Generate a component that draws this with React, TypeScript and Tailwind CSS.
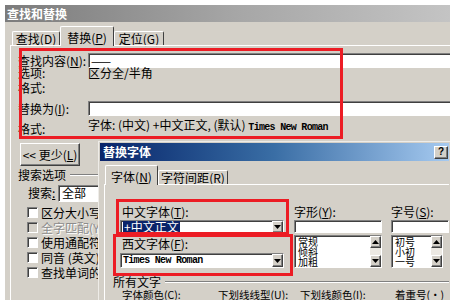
import React from "react";

const raised =
  "bg-[#d4d0c8] border border-t-white border-l-white border-r-[#404040] border-b-[#404040] shadow-[inset_-1px_-1px_0_#808080]";

function Field({ className = "", children }: { className?: string; children?: React.ReactNode }) {
  return (
    <div
      className={`bg-white border border-t-[#808080] border-l-[#808080] border-r-white border-b-white shadow-[inset_1px_1px_0_#404040] flex items-center ${className}`}
    >
      {children}
    </div>
  );
}

function Arrow({ up = false }: { up?: boolean }) {
  return (
    <svg width="7" height="4" viewBox="0 0 7 4">
      <path d={up ? "M0 4h7L3.5 0z" : "M0 0h7L3.5 4z"} fill="#000" />
    </svg>
  );
}

function ArrowBtn({ up = false, className = "" }: { up?: boolean; className?: string }) {
  return (
    <div className={`${raised} flex items-center justify-center ${className}`}>
      <Arrow up={up} />
    </div>
  );
}

function Tab({ label, k, active = false, w }: { label: string; k: string; active?: boolean; w: string }) {
  return (
    <div
      className={`${w} ${
        active ? "h-[20px] -mb-px pt-[3px] bg-[#d4d0c8] z-10" : "h-[14px]"
      } flex items-center justify-center whitespace-nowrap border-t border-l border-white border-r border-r-[#404040] rounded-t-[2px]`}
    >
      {label}(<u>{k}</u>)
    </div>
  );
}

function Check({ label, disabled = false }: { label: string; disabled?: boolean }) {
  return (
    <div className="h-[15px] flex items-center pl-[9px] gap-[3px]">
      <div
        className={`w-[11px] h-[11px] border border-t-[#808080] border-l-[#808080] border-r-white border-b-white shadow-[inset_1px_1px_0_#404040] ${
          disabled ? "bg-[#d4d0c8]" : "bg-white"
        }`}
      />
      <span className={`whitespace-nowrap ${disabled ? "text-[#8c8c8c] [text-shadow:1px_1px_0_#fff]" : ""}`}>{label}</span>
    </div>
  );
}

function ListBox({ items, w }: { items: string[]; w: string }) {
  return (
    <Field className={`${w} h-[33px] mt-[2px] items-stretch`}>
      <div className="flex-1 flex flex-col pl-[3px] text-[10px] leading-[10px] pt-[1px]">
        {items.map((t) => (
          <div key={t} className="h-[10px]">{t}</div>
        ))}
      </div>
      <div className="w-[11px] flex flex-col bg-[#ece9e3]">
        <ArrowBtn up className="h-[12px]" />
        <div className="flex-1" />
        <ArrowBtn className="h-[12px]" />
      </div>
    </Field>
  );
}

export default function App() {
  return (
    <div className="relative w-[450px] h-[300px] overflow-hidden bg-white font-['Noto_Sans_CJK_SC',sans-serif] text-[12px] leading-none text-black">
      {/* 查找和替换 window */}
      <div className="ml-[5px] mt-[5px] w-[460px] h-[300px] flex flex-col bg-[#d4d0c8]">
        <div className="h-[17px] flex items-center pl-[2px] bg-linear-to-r from-[#7c7c7c] via-[#a6a6a6] to-[#c6c6c6] text-white font-bold">
          查找和替换
        </div>
        <div className="h-[23px] flex items-end pl-[7px]">
          <Tab label="查找" k="D" w="w-[48px]" />
          <Tab label="替换" k="P" w="w-[54px]" active />
          <Tab label="定位" k="G" w="w-[50px]" />
        </div>
        <div className="flex-1 ml-[5px] border-t border-l border-white pl-[7px] flex flex-col">
          <div className="h-[15px] mt-[7px] flex items-center">
            <span className="w-[70px] whitespace-nowrap">查找内容(<u>N</u>):</span>
            <Field className="flex-1 h-[15px] pl-[2px]">——</Field>
          </div>
          <div className="h-[10px] flex items-center">
            <span className="w-[70px]">选项:</span>
            <span>区分全/半角</span>
          </div>
          <div className="h-[20px] flex items-center">
            <span>格式:</span>
          </div>
          <div className="h-[15px] mt-[3px] flex items-center">
            <span className="w-[70px] whitespace-nowrap">替换为(<u>I</u>):</span>
            <Field className="flex-1 h-[15px]" />
          </div>
          <div className="h-[20px] flex items-start">
            <span className="w-[70px] mt-[7px]">格式:</span>
            <span className="mt-[3px] whitespace-nowrap">
              字体: (中文) +中文正文, (默认){" "}
              <span className="font-['Liberation_Mono',monospace] text-[10px] font-bold tracking-[-0.7px]">Times New Roman</span>
            </span>
          </div>

          <div className={`${raised} mt-[7px] ml-[2px] w-[60px] h-[23px] flex items-center justify-center whitespace-nowrap`}>
            &lt;&lt; 更少(<u>L</u>)
          </div>
          <div className="h-[18px] flex items-center w-[90px]">
            <span className="whitespace-nowrap">搜索选项</span>
            <div className="flex-1 ml-[4px] border-t border-t-[#808080] border-b border-b-white" />
          </div>
          <div className="h-[18px] flex items-center">
            <span className="w-[40px] pl-[10px] whitespace-nowrap">
              搜索<u>:</u>
            </span>
            <Field className="w-[60px] h-[17px] pl-[3px]">全部</Field>
          </div>
          <div className="mt-[3px] flex flex-col">
            <Check label="区分大小写(H)" />
            <Check label="全字匹配(Y)" disabled />
            <Check label="使用通配符(U)" />
            <Check label="同音 (英文)(K)" />
            <Check label="查找单词的所有形式" />
          </div>
        </div>
      </div>

      {/* 替换字体 dialog on top */}
      <div className="absolute left-[98px] top-[141px] w-[352px] h-[170px] bg-[#d4d0c8] border-t border-l border-[#eeece8] p-[1px] flex flex-col">
        <div className="h-[18px] flex items-center justify-between pl-[3px] pr-[1px] bg-linear-to-r from-[#0a246a] via-[#3a6ea5] to-[#a6caf0] text-white font-bold">
          <span>替换字体</span>
          <div className={`${raised} w-[14px] h-[13px] flex items-center justify-center text-black text-[10px] font-bold font-['Liberation_Sans',sans-serif]`}>
            ?
          </div>
        </div>
        <div className="h-[23px] flex items-end pl-[5px]">
          <Tab label="字体" k="N" w="w-[53px]" active />
          <Tab label="字符间距" k="R" w="w-[70px]" />
        </div>
        <div className="flex-1 ml-[4px] border-t border-l border-white flex flex-col">
          <div className="flex pl-[15px] pt-[20px]">
            <div className="w-[170px] flex flex-col">
              <div className="h-[14px] flex items-center pl-[2px] whitespace-nowrap">中文字体(<u>T</u>):</div>
              <Field className="h-[14px] mt-[1px] justify-between pl-[2px]">
                <span className="bg-[#0a246a] text-white px-[1px]">+中文正文</span>
                <ArrowBtn className="w-[11px] h-full" />
              </Field>
              <div className="h-[19px] flex items-center pl-[2px] whitespace-nowrap">西文字体(<u>F</u>):</div>
              <Field className="h-[15px] justify-between pl-[2px]">
                <span className="font-['Liberation_Mono',monospace] text-[10px] font-bold tracking-[-0.7px]">Times New Roman</span>
                <ArrowBtn className="w-[11px] h-full" />
              </Field>
            </div>
            <div className="ml-[10px] w-[88px] flex flex-col">
              <div className="h-[14px] flex items-center whitespace-nowrap">字形(<u>Y</u>):</div>
              <Field className="h-[13px] mt-[1px]" />
              <ListBox items={["常规", "倾斜", "加粗"]} w="w-[88px]" />
            </div>
            <div className="ml-[9px] w-[60px] flex flex-col">
              <div className="h-[14px] flex items-center whitespace-nowrap">字号(<u>S</u>):</div>
              <Field className="h-[13px] mt-[1px]" />
              <ListBox items={["初号", "小初", "一号"]} w="w-[52px]" />
            </div>
          </div>
          <div className="h-[12px] mt-[8px] pl-[8px] flex items-center">
            <span className="whitespace-nowrap">所有文字</span>
            <div className="flex-1 ml-[4px] border-t border-t-[#808080] border-b border-b-white" />
          </div>
          <div className="h-[12px] mt-[1px] pl-[17px] flex items-center whitespace-nowrap text-[10.5px]">
            <span className="w-[96px]">字体颜色(<u>C</u>):</span>
            <span className="w-[82px]">下划线线型(<u>U</u>):</span>
            <span className="w-[95px]">下划线颜色(<u>I</u>):</span>
            <span>着重号(·)</span>
          </div>
        </div>

        {/* red annotation boxes */}
        <div className="absolute left-[17px] top-[57px] w-[173px] h-[36px] border-[3px] border-[#ec1c24]" />
        <div className="absolute left-[14px] top-[92px] w-[180px] h-[42px] border-[3px] border-[#ec1c24]" />
      </div>

      <div className="absolute left-[19px] top-[48px] w-[324px] h-[91px] border-[3px] border-[#ec1c24]" />
    </div>
  );
}
